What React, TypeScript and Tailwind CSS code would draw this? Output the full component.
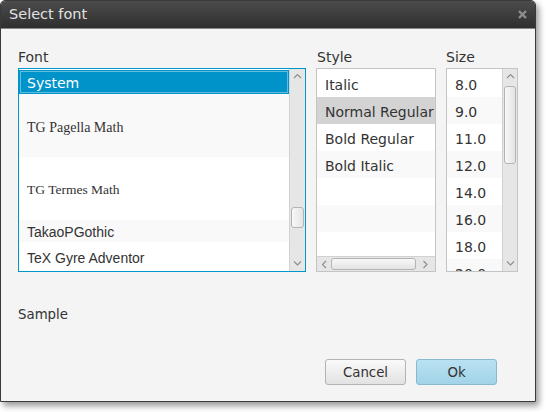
const ui = "font-['DejaVu_Sans',sans-serif]";

function Chevron({ dir }: { dir: "up" | "down" | "left" | "right" }) {
  const d = {
    up: "M1 5 L4.5 1.5 L8 5",
    down: "M1 1.5 L4.5 5 L8 1.5",
    left: "M5 1 L1.5 4.5 L5 8",
    right: "M1.5 1 L5 4.5 L1.5 8",
  }[dir];
  const vertical = dir === "up" || dir === "down";
  return (
    <svg
      width={vertical ? 9 : 7}
      height={vertical ? 7 : 9}
      viewBox={vertical ? "0 0 9 7" : "0 0 7 9"}
      fill="none"
      stroke="#8c8c8c"
      strokeWidth="1.1"
    >
      <path d={d} />
    </svg>
  );
}

function VScroll({ thumb, width }: { thumb: string; width: string }) {
  return (
    <div className={`${width} flex flex-col bg-[#e6e6e6] border-l border-[#d2d2d2]`}>
      <div className="h-[15px] flex items-center justify-center">
        <Chevron dir="up" />
      </div>
      <div className="flex-1 px-[1px]">
        <div className={`${thumb} rounded-[3px] border border-[#b4b4b4] bg-gradient-to-r from-[#f8f8f8] to-[#e4e4e4]`} />
      </div>
      <div className="h-[15px] flex items-center justify-center">
        <Chevron dir="down" />
      </div>
    </div>
  );
}

const fonts = [
  { name: "System", h: "h-[24px]", cls: ui, sel: true },
  { name: "TG Pagella Math", h: "h-[63px]", cls: "font-['Liberation_Serif',serif] text-[14px] bg-[#f9f9f9]" },
  { name: "TG Termes Math", h: "h-[63px]", cls: "font-['Liberation_Serif',serif] text-[13.5px] bg-white" },
  { name: "TakaoPGothic", h: "h-[22px]", cls: "font-['Liberation_Sans',sans-serif] text-[14px] bg-[#f9f9f9]" },
  { name: "TeX Gyre Adventor", h: "h-[29px]", cls: "font-['Liberation_Sans',sans-serif] text-[14px] bg-white" },
];

const styles = ["Italic", "Normal Regular", "Bold Regular", "Bold Italic", "", "", ""];
const sizes = ["8.0", "9.0", "11.0", "12.0", "14.0", "16.0", "18.0", "20.0"];

export default function App() {
  return (
    <div className={`w-[546px] h-[412px] bg-white ${ui} text-[13.33px] text-[#333]`}>
      <div className="w-[536px] h-[402px] flex flex-col border border-[#3a3a3a] rounded-t-[5px] overflow-hidden shadow-[3px_4px_6px_rgba(0,0,0,0.4)]">
        {/* title bar */}
        <div className="h-[28px] flex items-center justify-between pl-[8px] pr-[8px] bg-gradient-to-b from-[#4c4c4c] to-[#2f2f2f] border-b border-[#888]">
          <span className="text-[14.5px] text-[#e2e2e2] pt-[1px]">Select font</span>
          <svg width="9" height="9" viewBox="0 0 9 9" stroke="#8e8e8e" strokeWidth="2.4">
            <path d="M1 1 L8 8 M8 1 L1 8" />
          </svg>
        </div>

        <div className="flex-1 flex flex-col bg-[#f4f4f4] pl-[17px] pt-[20px]">
          <div className="flex gap-[10px]">
            {/* Font */}
            <div className="flex flex-col">
              <div className="h-[16px] leading-[16px] mb-[3px] text-[14px]">Font</div>
              <div className="w-[288px] h-[204px] flex border border-[#0096c9] bg-white">
                <div className="flex-1 flex flex-col pt-[1px] overflow-hidden">
                  {fonts.map((f) =>
                    f.sel ? (
                      <div
                        key={f.name}
                        className={`${f.h} shrink-0 flex items-center pl-[8px] pt-[3px] bg-[#0093c9] text-white shadow-[inset_0_0_0_1px_#0093c9,inset_0_0_0_2px_#5fbde0] text-[14px]`}
                      >
                        {f.name}
                      </div>
                    ) : (
                      <div key={f.name} className={`${f.h} ${f.cls} shrink-0 flex items-center pl-[8px] pt-[3px] text-[#333]`}>
                        {f.name}
                      </div>
                    )
                  )}
                </div>
                <VScroll width="w-[16px]" thumb="mt-[123px] h-[21px]" />
              </div>
            </div>

            {/* Style */}
            <div className="flex flex-col">
              <div className="h-[16px] leading-[16px] mb-[3px] pl-[1px] text-[14px]">Style</div>
              <div className="w-[120px] h-[204px] flex flex-col border border-[#c4c4c4] bg-white">
                <div className="flex-1 flex flex-col pt-[1px] overflow-hidden">
                  {styles.map((s, i) => (
                    <div
                      key={i}
                      className={`h-[27px] shrink-0 flex items-center pl-[8px] pt-[4px] whitespace-nowrap text-[14px] ${
                        i === 1 ? "bg-[#d3d3d3]" : i % 2 ? "bg-[#f9f9f9]" : "bg-white"
                      }`}
                    >
                      {s}
                    </div>
                  ))}
                </div>
                <div className="h-[15px] flex items-center bg-[#e6e6e6] border-t border-[#d2d2d2]">
                  <div className="w-[14px] flex justify-center">
                    <Chevron dir="left" />
                  </div>
                  <div className="w-[85px] h-[12px] rounded-[3px] border border-[#b4b4b4] bg-gradient-to-b from-[#f8f8f8] to-[#e4e4e4]" />
                  <div className="flex-1 flex justify-center">
                    <Chevron dir="right" />
                  </div>
                </div>
              </div>
            </div>

            {/* Size */}
            <div className="flex flex-col">
              <div className="h-[16px] leading-[16px] mb-[3px] text-[14px]">Size</div>
              <div className="w-[72px] h-[204px] flex border border-[#c4c4c4] bg-white">
                <div className="flex-1 flex flex-col pt-[1px] overflow-hidden">
                  {sizes.map((s, i) => (
                    <div
                      key={s}
                      className={`h-[27px] shrink-0 flex items-center pl-[8px] pt-[4px] text-[14px] ${i % 2 ? "bg-[#f9f9f9]" : "bg-white"}`}
                    >
                      {s}
                    </div>
                  ))}
                </div>
                <VScroll width="w-[15px]" thumb="mt-[2px] h-[78px]" />
              </div>
            </div>
          </div>

          <div className="h-[16px] leading-[16px] mt-[35px]">Sample</div>

          <div className="flex justify-end gap-[10px] pr-[38px] mt-[36px]">
            <button className="w-[81px] h-[26px] pt-[2px] rounded-[3px] border border-[#b3b3b3] bg-gradient-to-b from-[#fafafa] to-[#e2e2e2] text-[#333]">
              Cancel
            </button>
            <button className="w-[81px] h-[26px] pt-[2px] rounded-[3px] border border-[#88b9cf] bg-gradient-to-b from-[#b9e2f2] to-[#a2d3e8] text-[#333]">
              Ok
            </button>
          </div>
        </div>
      </div>
    </div>
  );
}
